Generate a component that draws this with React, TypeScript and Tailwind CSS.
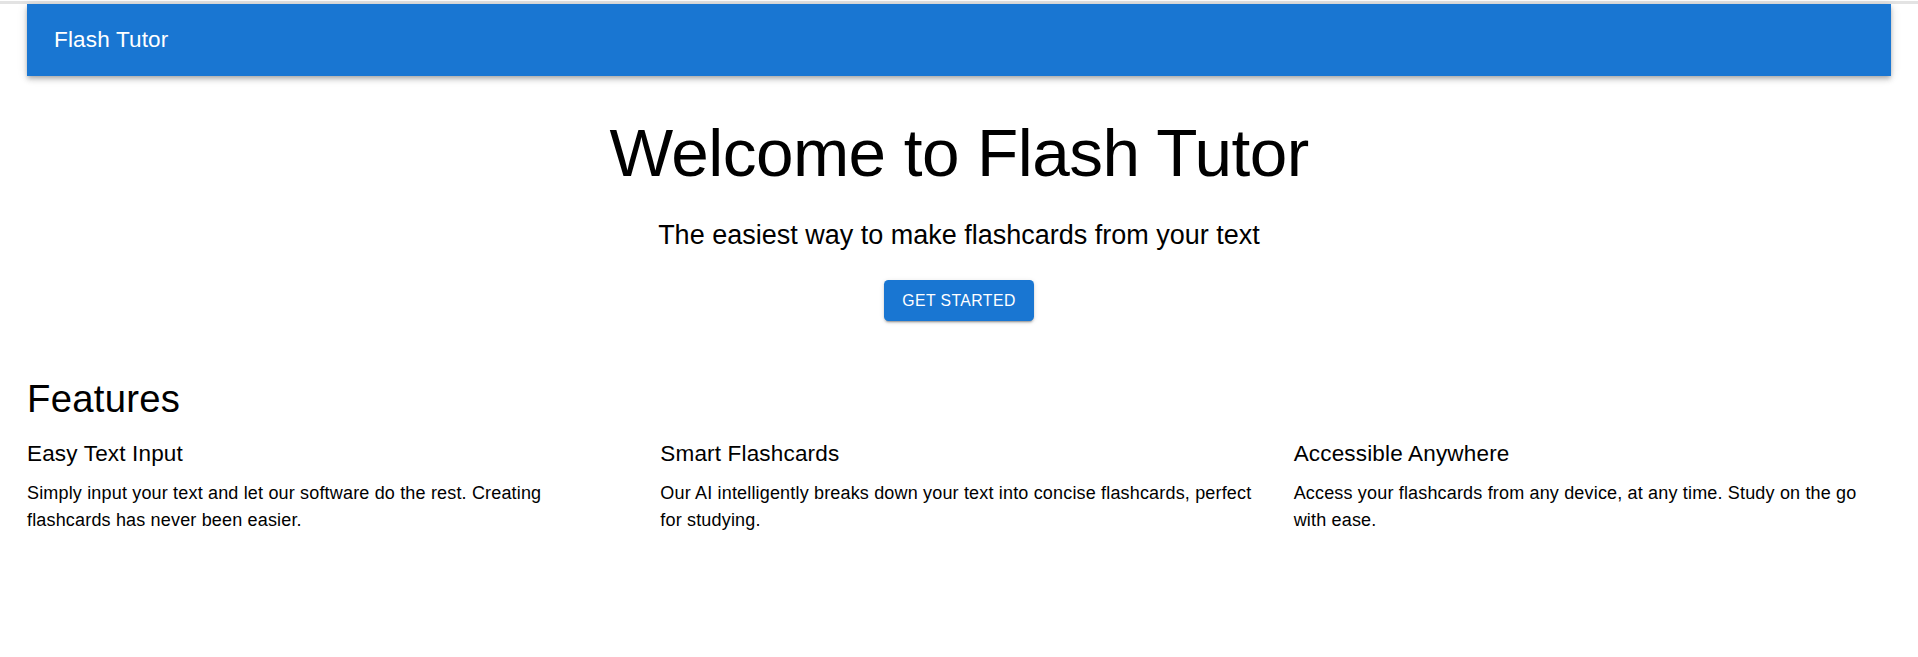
const features = [
  {
    title: "Easy Text Input",
    body: "Simply input your text and let our software do the rest. Creating flashcards has never been easier.",
  },
  {
    title: "Smart Flashcards",
    body: "Our AI intelligently breaks down your text into concise flashcards, perfect for studying.",
  },
  {
    title: "Accessible Anywhere",
    body: "Access your flashcards from any device, at any time. Study on the go with ease.",
  },
];

const App = () => {
  return (
    <div className="min-h-screen bg-white font-['Liberation_Sans',Arial,sans-serif] text-black">
      <div className="h-px" />
      <div className="h-[3px] bg-[#e3e3e3]" />
      <div className="px-[27px]">
        <header className="flex h-[72px] items-center bg-[#1976d2] px-[27px] shadow-[0_2px_4px_-1px_rgba(0,0,0,0.2),0_4px_5px_0_rgba(0,0,0,0.14),0_1px_10px_0_rgba(0,0,0,0.12)]">
          <h6 className="text-[22.5px] leading-[1.6] tracking-[0.17px] text-white">Flash Tutor</h6>
        </header>

        <section className="mt-[36px] flex flex-col items-center text-center">
          <h1 className="mb-[23.6px] text-[67.5px] leading-[1.2] tracking-[-0.56px]">Welcome to Flash Tutor</h1>
          <p className="mb-[9.45px] text-[27px] leading-[1.334]">The easiest way to make flashcards from your text</p>
          <button className="mt-[18px] h-[41px] rounded-[4.5px] bg-[#1976d2] px-[18px] text-[15.75px] leading-[1.75] tracking-[0.45px] text-white shadow-[0_3px_1px_-2px_rgba(0,0,0,0.2),0_2px_2px_0_rgba(0,0,0,0.14),0_1px_5px_0_rgba(0,0,0,0.12)]">
            GET STARTED
          </button>
        </section>

        <section className="mt-[54px]">
          <h2 className="mb-[13.4px] text-[38.25px] leading-[1.235] tracking-[0.28px]">Features</h2>
          <div className="grid grid-cols-3 gap-x-[36px]">
            {features.map((f) => (
              <div key={f.title}>
                <h3 className="mb-[7.9px] text-[22.5px] leading-[1.6] tracking-[0.17px]">{f.title}</h3>
                <p className="text-[18px] leading-[1.5] tracking-[0.17px]">{f.body}</p>
              </div>
            ))}
          </div>
        </section>
      </div>
    </div>
  );
};

export default App;
